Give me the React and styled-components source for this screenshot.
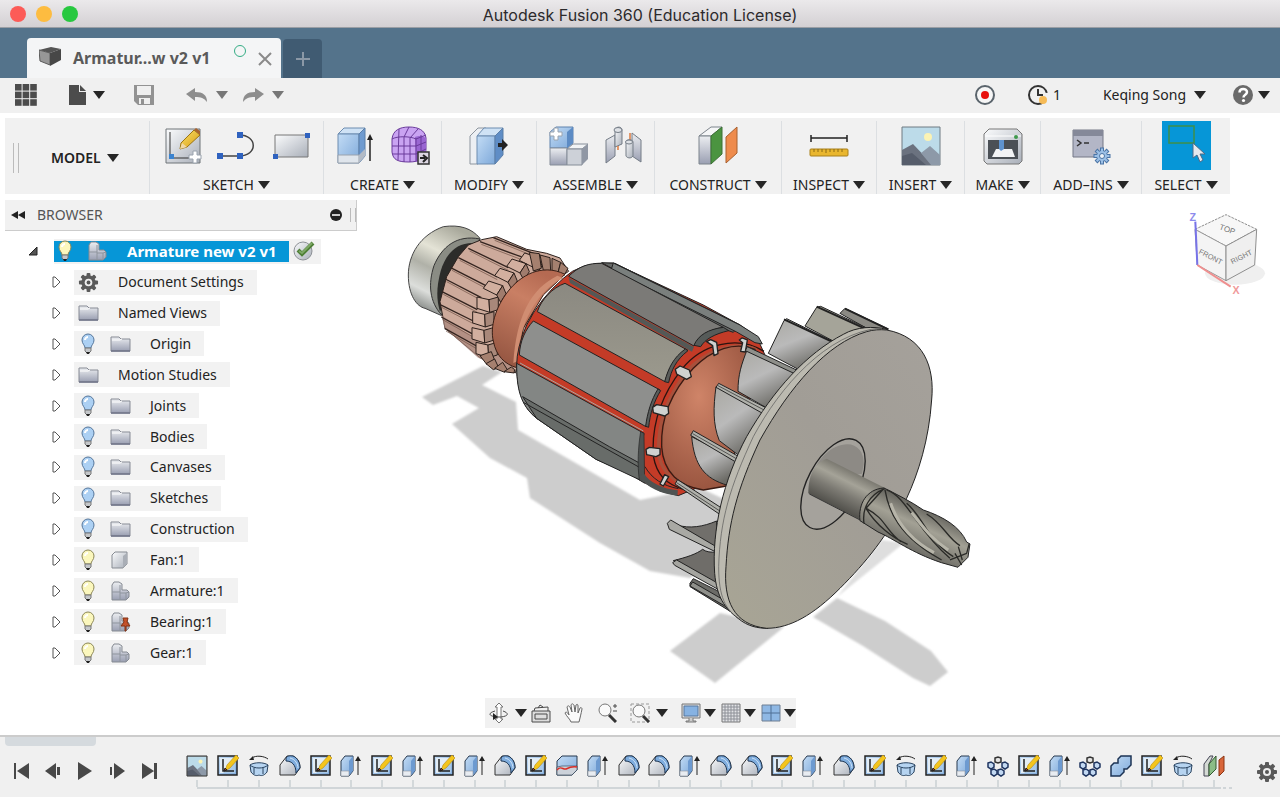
import { useState } from "react";
import styled, { createGlobalStyle } from "styled-components";

const GlobalStyle = createGlobalStyle`
  * {
    box-sizing: border-box;
  }
  body {
    margin: 0;
    background-color: #fff;
    color: #222;
    font-family: "Noto Sans", "Open Sans", sans-serif;
    font-size: 14px;
    line-height: 20px;
  }
  button {
    border: none;
    padding: 0;
    background: transparent;
    font: inherit;
    color: inherit;
    cursor: pointer;
  }
  svg {
    display: block;
    flex: none;
  }
`;

const Page = styled.div`
  min-height: 100vh;
  display: flex;
  flex-direction: column;
`;

const TitleBar = styled.header`
  height: 28px;
  flex: none;
  display: grid;
  grid-template-columns: 1fr auto 1fr;
  align-items: center;
  padding: 0 10px;
  background: linear-gradient(#ebe9eb, #d3d0d3);
  border-bottom: 1px solid #9a9ea4;
`;
const Lights = styled.div`
  display: flex;
  gap: 10px;
`;
const Light = styled.button`
  width: 16px;
  height: 16px;
  border-radius: 50%;
  background-color: ${(p) => p.$color};
`;
const WindowTitle = styled.h1`
  margin: 0;
  padding-top: 2px;
  font-family: Inter, sans-serif;
  font-size: 16px;
  font-weight: 400;
  color: #2c2a2c;
`;

const TabBar = styled.nav`
  height: 50px;
  flex: none;
  display: flex;
  align-items: flex-end;
  gap: 2px;
  padding-left: 27px;
  background-color: #54738b;
`;
const Tab = styled.div`
  width: 254px;
  height: 40px;
  display: flex;
  align-items: center;
  padding: 0 9px 0 12px;
  border-radius: 4px 4px 0 0;
  background-color: #f4f5f6;
`;
const TabName = styled.span`
  flex: 1;
  margin-left: 12px;
  font-size: 16px;
  font-weight: 700;
  color: #5a5a5a;
`;
const SyncDot = styled.span`
  width: 12px;
  height: 12px;
  margin: 0 12px 14px 0;
  border: 1px solid #35ad85;
  border-radius: 50%;
`;
const NewTab = styled.button`
  width: 39px;
  height: 39px;
  display: grid;
  place-items: center;
  border-radius: 4px 4px 0 0;
  background-color: #405b72;
`;

const QuickBar = styled.div`
  height: 35px;
  flex: none;
  display: flex;
  align-items: center;
  justify-content: space-between;
  padding: 0 10px 2px 15px;
  background-color: #f0f0f0;
`;
const QuickGroup = styled.div`
  display: flex;
  align-items: center;
  gap: ${(p) => p.$gap}px;
`;
const QuickButton = styled.button`
  display: flex;
  align-items: center;
  gap: ${(p) => p.$gap || 6}px;
`;

const Ribbon = styled.div`
  flex: none;
  height: 76px;
  width: fit-content;
  display: flex;
  margin: 5px 0 0 5px;
  padding-top: 3px;
  background-color: #f1f1f1;
`;
const RibbonGroup = styled.section`
  width: ${(p) => p.$width}px;
  display: flex;
  flex-direction: column;
  align-items: center;
  justify-content: space-between;
  border-left: 1px solid #dcdfe2;
`;
const RibbonIcons = styled.div`
  height: 49px;
  display: flex;
  align-items: center;
  gap: 14px;
`;
const RibbonLabel = styled.button`
  height: 18px;
  display: flex;
  align-items: center;
  gap: 4px;
  line-height: 18px;
`;
const Workspace = styled.div`
  width: 144px;
  display: flex;
  align-items: center;
  gap: 32px;
  padding-left: 8px;
`;
const Grip = styled.span`
  width: 6px;
  height: ${(p) => p.$height}px;
  border: solid #bbb;
  border-width: 0 1px;
`;
const WorkspaceButton = styled(QuickButton)`
  font-weight: 600;
`;
const SelectTile = styled.button`
  width: 49px;
  height: 49px;
  background-color: #0696d7;
`;

const Main = styled.main`
  flex: 1;
  display: grid;
  grid-template-columns: 400px 1fr 100px;
  grid-template-rows: 1fr auto;
`;
const BrowserPanel = styled.aside`
  grid-row: 1;
  padding: 6px 0 0 5px;
`;
const BrowserHeader = styled.div`
  width: 352px;
  height: 31px;
  display: flex;
  align-items: center;
  gap: 11px;
  padding: 0 0 0 6px;
  background-color: #f1f1f1;
  border-bottom: 1px solid #ccc;
  border-right: 1px solid #ccc;
  color: #555;
`;
const BrowserTitle = styled.h2`
  flex: 1;
  margin: 0;
  font-size: 14px;
  font-weight: 400;
`;
const BrowserControls = styled.div`
  display: flex;
  align-items: center;
  gap: 8px;
`;
const Tree = styled.ul`
  height: 432px;
  margin: 5px 0 0;
  padding: 0;
  display: grid;
  grid-auto-rows: 1fr;
  list-style: none;
`;
const TreeRow = styled.li`
  display: flex;
  align-items: center;
  gap: ${(p) => (p.$root ? 15 : 12)}px;
  padding-left: ${(p) => (p.$root ? 22 : 46)}px;
`;
const TreeItem = styled.div`
  height: 25px;
  display: flex;
  align-items: center;
  gap: 12px;
  padding: 0 13px 0 4px;
  background-color: #f2f2f2;
`;
const TreeName = styled.span`
  margin-left: 7px;
`;
const RootItem = styled.div`
  height: 25px;
  display: flex;
  align-items: center;
  gap: 4px;
  padding-right: 6px;
  background-color: #f2f2f2;
`;
const RootSelected = styled.div`
  height: 21px;
  display: flex;
  align-items: center;
  gap: 12px;
  padding: 0 12px 0 1px;
  background-color: #0696d7;
  color: #fff;
  font-size: 15px;
  font-weight: 700;
`;

const Model = styled.svg`
  width: 100%;
  height: 100%;
  min-height: 504px;
`;
const CubeSlot = styled.div`
  padding-top: 11px;
`;
const NavBar = styled.div`
  grid-column: 1 / -1;
  justify-self: center;
  height: 30px;
  display: flex;
  align-items: center;
  gap: 13px;
  margin-bottom: 7px;
  padding-left: 4px;
  background-color: #f1f1f1;
`;
const NavGroup = styled.div`
  display: flex;
  align-items: center;
  gap: ${(p) => p.$gap}px;
`;

const Timeline = styled.footer`
  flex: none;
  height: 62px;
  display: flex;
  background-color: #f0f0f0;
  border-top: 2px solid #ccc;
`;
const Playback = styled.div`
  width: 182px;
  padding-left: 5px;
`;
const ScrollThumb = styled.div`
  width: 91px;
  height: 9px;
  border-radius: 0 0 4px 4px;
  background-color: #d5dade;
`;
const PlaybackButtons = styled.div`
  display: flex;
  gap: 12px;
  padding: 15px 0 0 6px;
`;
const Track = styled.div`
  flex: 1;
  padding-top: 18px;
`;
const Features = styled.ol`
  display: grid;
  grid-auto-flow: column;
  grid-auto-columns: 1fr;
  justify-items: center;
  margin: 0;
  padding: 0;
  list-style: none;
`;
const Feature = styled.li`
  display: flex;
  flex-direction: column;
  align-items: center;
  gap: 3px;

  &::after {
    content: "";
    width: 2px;
    height: 7px;
    background-color: #d3d8da;
  }
`;
const Rail = styled.div`
  height: 2px;
  margin: 0 -6px 0 15px;
  background: linear-gradient(#d0d5d8, #d0d5d8) no-repeat 0 0 / calc(100% - 14px) 100%,
    repeating-linear-gradient(90deg, #d0d5d8 0 3px, transparent 3px 6px);
`;
const TimelineSettings = styled.button`
  width: 51px;
  padding: 9px 2px 0 0;
  display: grid;
  place-items: center end;
`;

/* small shared glyphs */

const Caret = ({ color = "#262626" }) => (
  <svg width="12" height="10" viewBox="0 0 12 10">
    <path d="M0 1h12L6 9z" fill={color} />
  </svg>
);

const Gear = ({ size = 22 }) => (
  <svg width={size} height={size} viewBox="0 0 22 22">
    <g fill="#5a5a5a">
      {[0, 45, 90, 135].map((a) => (
        <rect key={a} x="9" y="1" width="4" height="20" rx="1" transform={`rotate(${a} 11 11)`} />
      ))}
      <circle cx="11" cy="11" r="7.500" />
    </g>
    <circle cx="11" cy="11" r="4" fill="#eee" />
    <circle cx="11" cy="11" r="2" fill="#555" />
  </svg>
);

const Defs = () => (
  <svg width="0" height="0" style={{ position: "absolute" }} aria-hidden="true">
    <defs>
      <linearGradient id="steel" x1="0" y1="0" x2="1" y2="1">
        <stop offset="0" stopColor="#fbfcfd" />
        <stop offset="1" stopColor="#a9afb9" />
      </linearGradient>
      <linearGradient id="steelDown" x1="0" y1="0" x2="0" y2="1">
        <stop offset="0" stopColor="#eceef1" />
        <stop offset="1" stopColor="#9a9fb2" />
      </linearGradient>
      <linearGradient id="blue" x1="0" y1="0" x2="1" y2="1">
        <stop offset="0" stopColor="#c3dcf5" />
        <stop offset="1" stopColor="#7ea9da" />
      </linearGradient>
      <linearGradient id="pencil" x1="0" y1="0" x2="1" y2="1">
        <stop offset="0" stopColor="#fbe26a" />
        <stop offset="1" stopColor="#d79b12" />
      </linearGradient>
    </defs>
  </svg>
);

/* quick access bar */

const AppsIcon = () => (
  <svg width="22" height="22" viewBox="0 0 22 22" fill="#4c4c4c">
    {[0, 1, 2].map((r) =>
      [0, 1, 2].map((c) => <rect key={`${r}${c}`} x={c * 7.6} y={r * 7.6} width="6.600" height="6.600" />)
    )}
  </svg>
);
const FileIcon = () => (
  <svg width="19" height="22" viewBox="0 0 19 22">
    <path d="M1 1h10v7h7v13H1z" fill="#4c4c4c" />
    <path d="M12 1v6h6z" fill="#4c4c4c" />
  </svg>
);
const SaveIcon = () => (
  <svg width="22" height="22" viewBox="0 0 22 22">
    <path d="M1 1h20v20H5l-4-4z" fill="#929292" />
    <path d="M4 2h14v9H4z" fill="#efefef" />
    <path d="M6 14h11v6H6z" fill="#efefef" />
    <path d="M8 15h3v5H8z" fill="#929292" />
  </svg>
);
const UndoIcon = ({ flip }) => (
  <svg width="22" height="16" viewBox="0 0 22 16">
    <path
      d="M0 7l9-6v4c8 0 12 3 12 10-3-4-6-5-12-5v4z"
      fill="#8d8d8d"
      transform={flip ? "matrix(-1 0 0 1 22 0)" : undefined}
    />
  </svg>
);
const RecordIcon = () => (
  <svg width="20" height="20" viewBox="0 0 20 20">
    <circle cx="10" cy="10" r="9" fill="#f6f6f6" stroke="#5a646c" strokeWidth="2" />
    <circle cx="10" cy="10" r="4" fill="#e8100c" />
  </svg>
);
const ClockIcon = () => (
  <svg width="22" height="22" viewBox="0 0 22 22">
    <circle cx="11" cy="11" r="9" fill="none" stroke="#333" strokeWidth="2" strokeDasharray="46 8" strokeDashoffset="-8" />
    <path d="M11 5v6h5" fill="none" stroke="#333" strokeWidth="2" />
    <circle cx="16" cy="16" r="4" fill="#f6bb57" />
  </svg>
);
const HelpIcon = () => (
  <svg width="20" height="20" viewBox="0 0 20 20">
    <circle cx="10" cy="10" r="10" fill="#6a6a6a" />
    <path d="M6.500 7.500c0-5 7.500-4.500 7.500-.5 0 3-3.500 2.500-3.500 5.500" fill="none" stroke="#fff" strokeWidth="2.500" />
    <circle cx="10.500" cy="15.500" r="1.600" fill="#fff" />
  </svg>
);
const TabCube = () => (
  <svg width="22" height="24" viewBox="0 0 22 24">
    <path d="M0 4L12 1l10 2-11 4z" fill="#555" />
    <path d="M0 4l11 3v12L1 15z" fill="#979797" stroke="#5b5b5b" />
    <path d="M11 7l11-4v11l-11 6z" fill="#474747" />
  </svg>
);

/* ribbon icons, all on a 40px square */

const Big = ({ children }) => (
  <svg width="40" height="40" viewBox="0 0 40 40">
    {children}
  </svg>
);
const BigPlus = ({ x, y }) => (
  <path
    d="M-6-2h4v-4h4v4h4v4h-4v4h-4v-4h-4z"
    transform={`translate(${x} ${y})`}
    fill="#fff"
    stroke="#9aa3ae"
  />
);
const CreateSketch = () => (
  <Big>
    <path d="M3 3h34v34H3z" fill="url(#steel)" stroke="#6f7479" />
    <path d="M7 6v26h20" fill="none" stroke="#333" />
    <rect x="6" y="28" width="5" height="5" fill="#3b83cf" />
    <path d="M18 17L31 4l6 5-13 12-7 2z" fill="url(#pencil)" stroke="#9b7415" />
    <path d="M31 4l2-2 4 3v4z" fill="#a8642f" />
    <path d="M17 23l2-6 5 4z" fill="#f0d8a8" />
    <BigPlus x="32" y="31" />
  </Big>
);
const LineIcon = () => (
  <Big>
    <path d="M3 30h19c19 0 19-21 0-21" fill="none" stroke="#444" strokeWidth="1.500" />
    <g fill="#2f62bf">
      <rect x="0" y="27" width="6" height="6" />
      <rect x="20" y="27" width="6" height="6" />
      <rect x="20" y="6" width="6" height="6" />
    </g>
  </Big>
);
const RectIcon = () => (
  <Big>
    <path d="M4 9h33v22H4z" fill="url(#steel)" stroke="#777" />
    <g fill="#2f62bf">
      <rect x="2" y="28" width="5" height="5" />
      <rect x="34" y="7" width="5" height="5" />
    </g>
  </Big>
);
const ExtrudeBig = () => (
  <Big>
    <path d="M2 8l6-6h21l-6 6z" fill="#cfe2f5" stroke="#6c8cb0" />
    <path d="M2 8h21v29H2z" fill="url(#blue)" stroke="#6c8cb0" />
    <path d="M23 8l6-6v28l-6 7z" fill="#6f9bd0" stroke="#5b7ea8" />
    <path d="M2 29h21v8H2z" fill="#dfe5ec" stroke="#9ba3ad" />
    <path d="M23 29l6-6v7l-6 7z" fill="#b3bbc6" />
    <path d="M34 35V10" stroke="#222" strokeWidth="1.500" />
    <path d="M31 14l3-6 3 6z" fill="#222" />
  </Big>
);
const FormIcon = () => (
  <Big>
    <path d="M2 13C3 4 10 1 19 1s16 3 17 11v11c0 9-6 13-17 13S3 34 2 26z" fill="#c9a3f2" stroke="#6a3b9b" />
    <path d="M25 11C32 8 36 12 36 13v11c0 8-5 10-10 12z" fill="#9a66d2" />
    <path d="M2 13c5-3 18-3 24 0l10-4M2 20h24l10-4M2 28h24l10-5M9 3l-1 31M19 1l-5 10v25M28 3l-8 9v24M26 12v23M31 9v23" fill="none" stroke="#6a3b9b" />
    <rect x="28" y="26" width="11" height="12" fill="#dcd6e2" stroke="#333" strokeWidth="1.500" />
    <path d="M30 32h5M33 29l4 3-4 4" fill="none" stroke="#222" strokeWidth="2" />
  </Big>
);
const PressPull = () => (
  <Big>
    <path d="M1 10l8-8h8l-8 8v28H1z" fill="#eceff3" stroke="#8d959e" />
    <path d="M8 10l7-8h19l-8 8z" fill="#cfe2f5" stroke="#6c8cb0" />
    <path d="M8 10h18v28H8z" fill="url(#blue)" stroke="#6c8cb0" />
    <path d="M26 10l8-8v27l-8 9z" fill="#5f8dc6" stroke="#5b7ea8" />
    <path d="M29 17h4v-4l6 6-6 6v-4h-4z" fill="#222" />
  </Big>
);
const NewComponent = () => (
  <Big>
    <path d="M1 22V6l6-5h17v16l-6 5z" fill="url(#blue)" stroke="#5e82ad" />
    <path d="M18 22V6l6-5v16z" fill="#5c8bc4" />
    <path d="M1 22h17v17H1z" fill="url(#steelDown)" stroke="#858d98" />
    <path d="M18 23l6-5h15l-6 5z" fill="#f1f3f5" stroke="#858d98" />
    <path d="M18 23h15v16H18z" fill="#cdd1d8" stroke="#858d98" />
    <path d="M33 23l6-5v15l-6 6z" fill="#9097a4" />
    <BigPlus x="7" y="8" />
  </Big>
);
const JointIcon = () => (
  <Big>
    <path d="M3 14l9-5v21l-9 7z" fill="url(#steelDown)" stroke="#747c86" />
    <path d="M12 5c0-5 7-5 7-1v14l-7 3z" fill="url(#steel)" stroke="#747c86" />
    <ellipse cx="15" cy="4" rx="4" ry="2.500" fill="#dfe2e6" stroke="#747c86" />
    <path d="M15 20v4M27 7v7" stroke="#dd7b40" strokeWidth="1.500" />
    <path d="M29 7l9 7v22l-9-6z" fill="url(#steelDown)" stroke="#747c86" />
    <path d="M23 16c0-3 7-3 7 0v14c-2 3-6 2-7 0z" fill="url(#steel)" stroke="#747c86" />
    <ellipse cx="26" cy="16" rx="3.500" ry="2" fill="#dfe2e6" stroke="#747c86" />
  </Big>
);
const PlaneIcon = () => (
  <Big>
    <path d="M1 10l12-9h11l-11 9z" fill="#f5f6f7" stroke="#7d848c" />
    <path d="M1 10h12v28H1z" fill="url(#steelDown)" stroke="#7d848c" />
    <path d="M13 10l11-9v27l-11 10z" fill="#4b9440" stroke="#3c7034" />
    <path d="M28 11l11-10v26L28 37z" fill="#ee8b4c" stroke="#a8602f" />
  </Big>
);
const MeasureIcon = () => (
  <Big>
    <path d="M2 9v7M38 9v7M2 12h36" stroke="#222" strokeWidth="1.500" />
    <rect x="1" y="23" width="38" height="7" rx="1" fill="#e9b62e" stroke="#a9801a" />
    <path d="M5 23v3M9 23v3M13 23v3M17 23v4M21 23v3M25 23v3M29 23v3M33 23v3" stroke="#8c6a12" />
  </Big>
);
const PictureArt = () => (
  <>
    <path d="M1 1h38v38H1z" fill="#bcdbe9" stroke="#6f7b82" />
    <circle cx="27" cy="11" r="4" fill="#fbf3b4" />
    <path d="M1 24l11-6 20 21H1z" fill="#6b727f" />
    <path d="M20 27l9-7 10 9v10H30z" fill="#8d99a8" />
    <path d="M1 30l10-3 14 12H1z" fill="#565d6b" />
  </>
);
const InsertIcon = () => (
  <Big>
    <PictureArt />
  </Big>
);
const MakeIcon = () => (
  <Big>
    <path d="M6 3h28l5 5v27l-3 3H4l-3-3V8z" fill="url(#steel)" stroke="#777" />
    <path d="M2 10h36" stroke="#fff" />
    <circle cx="33" cy="11" r="2" fill="#3f9a4d" />
    <rect x="5" y="14" width="30" height="19" fill="#4b5056" />
    <path d="M13 23h16l3 8H9z" fill="#f2f3f5" />
    <path d="M16 14h5v9l-3 2-2-2z" fill="#5f93cf" />
  </Big>
);
const AddinsIcon = () => (
  <Big>
    <path d="M2 4h30v27H2z" fill="#b3b6c6" stroke="#757987" />
    <path d="M2 4h30v6H2z" fill="#858999" />
    <path d="M6 14l4 3-4 3M13 17h5" fill="none" stroke="#333" strokeWidth="1.500" />
    <g transform="translate(31 30)" fill="#9cc0e6" stroke="#4b74a5">
      {[0, 45, 90, 135].map((a) => (
        <rect key={a} x="-1.500" y="-8" width="3" height="16" transform={`rotate(${a})`} />
      ))}
      <circle r="5" stroke="none" />
      <circle r="2.500" fill="#eef3f8" />
    </g>
  </Big>
);
const SelectIcon = () => (
  <svg width="49" height="49" viewBox="0 0 49 49">
    <rect x="7" y="5" width="25" height="17" fill="none" stroke="#3f8f4a" strokeWidth="1.500" />
    <path d="M31 22v15l4-3 3 7 3-2-3-6h5z" fill="#e6e9ee" stroke="#4c6a88" />
  </svg>
);

/* browser tree icons */

const Bulb = ({ on }) => (
  <svg width="20" height="22" viewBox="0 0 20 22">
    <path d="M7 15c0-3-3-4-3-8a6 6 0 0 1 12 0c0 4-3 5-3 8z" fill={on ? "#fbf7bd" : "#acd0f3"} stroke={on ? "#8c8756" : "#55769b"} />
    <path d="M7 7c0-2 2-3 3-3" fill="none" stroke="#fff" strokeWidth="2" />
    <path d="M7 15h6v3l-2 2H9l-2-2z" fill="#c4c7ca" stroke="#777" />
    <path d="M8 19h4l-1 2H9z" fill="#222" />
  </svg>
);
const Folder = () => (
  <svg width="21" height="20" viewBox="0 0 21 20">
    <path d="M1 3h8l2 2h9v12H1z" fill="url(#steelDown)" stroke="#878b95" />
    <path d="M2 6h8l2-1" fill="none" stroke="#fff" />
    <path d="M1 17h19" stroke="#70748a" strokeWidth="1.500" />
  </svg>
);
const Part = () => (
  <svg width="21" height="20" viewBox="0 0 21 20">
    <path d="M2 5l3-3h12v12l-4 4H2z" fill="url(#steel)" stroke="#878c93" />
    <path d="M13 6v12l4-4V3z" fill="#a9aeb6" />
  </svg>
);
const Assembly = ({ pinned }) => (
  <svg width="21" height="20" viewBox="0 0 21 20">
    <path d="M2 4l2-3h5l3 2v6h5l2 2v5l-3 3H2z" fill="url(#steelDown)" stroke="#858a92" />
    <path d="M2 11h8M10 19V4M10 12h6l3-1M16 12v7" fill="none" stroke="#8e949d" />
    {pinned && (
      <path d="M13 6h5l-1 4 3 4h-4v5h-1v-5h-4l3-4z" fill="#c4512a" stroke="#833112" />
    )}
  </svg>
);
const CheckBadge = () => (
  <svg width="22" height="22" viewBox="0 0 22 22">
    <circle cx="10" cy="11" r="9" fill="url(#steel)" stroke="#8d9196" />
    <path d="M5 10l4 4L20 3" fill="none" stroke="#4d7f35" strokeWidth="4" />
    <path d="M6 11l3 2L19 3" fill="none" stroke="#7ea866" strokeWidth="2" />
  </svg>
);

/* navigation bar icons */

const Small = ({ children }) => (
  <svg width="20" height="20" viewBox="0 0 20 20" fill="none" stroke="#4a4a4a">
    {children}
  </svg>
);
const navIcons = {
  orbit: (
    <Small>
      <path d="M8 4v12H6l4 4 4-4h-2V4h2l-4-4-4 4z" fill="#fff" stroke="#777" />
      <path d="M6 8c-7 2-7 5 2 6h4c8-1 8-4 2-6" />
      <path d="M4 10l5 4-5 3z" fill="#222" stroke="none" />
    </Small>
  ),
  lookAt: (
    <Small>
      <path d="M1 8h18v11H1z" fill="#ddd" />
      <path d="M4 11h12v5H4zM3 8l1-3 13-1v4M7 5l2-3 3 2" />
    </Small>
  ),
  hand: (
    <Small>
      <path d="M7 19c-1-3-4-5-6-9 1-2 3 0 4 2L3 4c1-2 2-1 3 0l2 5-1-7c1-2 2-1 3 0l1 7 1-7c1-1 2-1 2 1v7l2-5c1-1 2 0 2 1-1 5-2 9-3 13z" fill="#fafafa" stroke="#666" />
    </Small>
  ),
  zoom: (
    <Small>
      <circle cx="8" cy="7" r="6" fill="#fafafa" stroke="#777" />
      <path d="M12 12l7 7" stroke="#333" strokeWidth="3" />
      <path d="M16 3h4M18 1v4M16 8h4" />
    </Small>
  ),
  zoomWindow: (
    <Small>
      <path d="M1 1h18v18H1z" strokeDasharray="3 2" stroke="#999" />
      <circle cx="9" cy="8" r="6" fill="#fafafa" stroke="#777" />
      <path d="M13 13l6 6" stroke="#333" strokeWidth="3" />
    </Small>
  ),
  display: (
    <Small>
      <path d="M1 1h18v14H1z" fill="#ddd" stroke="#777" />
      <path d="M3 3h14v10H3z" fill="#86b2e2" stroke="#56779d" />
      <path d="M8 15v3H5v1h10v-1h-3v-3" fill="#ccc" stroke="#777" />
    </Small>
  ),
  grid: (
    <Small>
      <path d="M1 1h18v18H1z" fill="#e2e3e6" stroke="#777" />
      <path d="M4 1v18M7 1v18M10 1v18M13 1v18M16 1v18M1 4h18M1 7h18M1 10h18M1 13h18M1 16h18" stroke="#8d9097" />
    </Small>
  ),
  views: (
    <Small>
      <path d="M1 2h18v16H1z" fill="#8fb8e4" stroke="#6f7f92" />
      <path d="M10 2v16M1 10h18" stroke="#4f6f94" />
    </Small>
  ),
};

const NavButton = ({ icon, label, menu, gap = 3 }) => (
  <QuickButton $gap={gap} aria-label={label}>
    {navIcons[icon]}
    {menu && <Caret />}
  </QuickButton>
);

/* timeline feature icons, on a 22px square */

const featureArt = {
  canvas: (
    <>
      <g transform="translate(1 1) scale(.5)">
        <PictureArt />
      </g>
      <path d="M1 1h20v20H1z" fill="none" stroke="#2c2c2c" />
    </>
  ),
  sketch: (
    <>
      <path d="M1 1h19v19H1z" fill="url(#blue)" stroke="#222" strokeWidth="1.500" />
      <path d="M3 3h15v15H3z" fill="#e3edf5" />
      <path d="M18 6v12H6z" fill="#a9c9e8" />
      <path d="M6 4v12h11" fill="none" stroke="#222" strokeWidth="1.500" />
      <path d="M10 10l9-10 3 3-9 10-5 3z" fill="#f4c51c" stroke="#b58a10" strokeWidth=".6" />
      <path d="M7 16l1-3 2 2z" fill="#b3401d" stroke="#222" />
    </>
  ),
  revolve: (
    <>
      <path d="M4 3c4-3 12-2 16 1" fill="none" stroke="#222" />
      <path d="M1 5l4-4 1 4z" fill="#222" />
      <path d="M2 10c4-3 14-3 18 0l-1 7c-3 4-6 4-8 3-2 1-5 1-8-3z" fill="#b6d4f1" stroke="#28425f" />
      <path d="M2 10c4 4 14 4 18 0M6 13v6M15 13v6" fill="none" stroke="#28425f" />
    </>
  ),
  fillet: (
    <>
      <path d="M1 20V10l7-9h6c5 2 7 7 7 12l-5 7z" fill="url(#steel)" stroke="#333" />
      <path d="M7 3c2-3 5-2 7-2 5 2 7 7 7 12l-4 5c0-8-4-12-10-12z" fill="#7fadde" stroke="#1d3552" />
      <path d="M11 3c5 1 8 6 8 10" fill="none" stroke="#cfe3f7" />
    </>
  ),
  extrude: (
    <>
      <path d="M1 6l4-5h8v15l-4 5H1z" fill="url(#blue)" stroke="#27394f" />
      <path d="M9 6v14l4-4V1z" fill="#6d9ad0" />
      <path d="M1 16h8v5H1z" fill="#e8ecf1" stroke="#8b929b" strokeWidth=".6" />
      <path d="M18 20V4" stroke="#222" />
      <path d="M15 6l3-5 3 5z" fill="#222" />
    </>
  ),
  split: (
    <>
      <path d="M1 6l5-5h15v14l-5 5H1z" fill="url(#blue)" stroke="#27394f" />
      <path d="M1 12l5-1h15v4l-5 5H1z" fill="#ccd2da" stroke="#27394f" strokeWidth=".6" />
      <path d="M1 15c4-5 6 0 9-1 4-2 7-3 11-2" fill="none" stroke="#d92d27" strokeWidth="1.500" />
    </>
  ),
  pattern: (
    <>
      {[[4, 10], [7, 17], [14, 17], [18, 10]].map(([x, y]) => (
        <path key={`${x}${y}`} d="M-3-2l3-1 3 2v3l-3 2-3-2z" transform={`translate(${x} ${y})`} fill="#c3d9f2" stroke="#1f3560" strokeWidth="1.500" />
      ))}
      <path d="M8 3l3-1 3 1v4l-3 1-3-1z" fill="#e4e4e4" stroke="#333" strokeWidth="1.500" />
    </>
  ),
  combine: (
    <path d="M1 11l3-3h4V4l3-3h10v9l-4 4h-3v3l-4 4H1z" fill="url(#blue)" stroke="#1d3354" strokeWidth="1.500" />
  ),
  plane: (
    <>
      <path d="M1 9l6-8h3L6 9v12H1z" fill="#d5dad5" stroke="#445" />
      <path d="M6 9l7-8v13l-7 7z" fill="#8bbd87" stroke="#33592f" />
      <path d="M16 5l5-4v15l-5 5z" fill="#d9663a" stroke="#8a3413" />
    </>
  ),
};

const features = [
  "canvas", "sketch", "revolve", "fillet", "sketch", "extrude", "sketch",
  "extrude", "sketch", "extrude", "fillet", "sketch", "split", "extrude",
  "fillet", "fillet", "extrude", "fillet", "fillet", "sketch", "extrude",
  "fillet", "sketch", "revolve", "sketch", "extrude", "pattern", "sketch",
  "extrude", "pattern", "combine", "sketch", "revolve", "plane",
];

const playback = [
  { label: "Go to start", d: "M1 1h2v16H1zM16 1v16L4 9z" },
  { label: "Step back", d: "M11 1v16L0 9zM12 5h3v8h-3z" },
  { label: "Play", d: "M1 0v18l14-9z" },
  { label: "Step forward", d: "M5 1v16l11-8zM1 5h2v8H1z" },
  { label: "Go to end", d: "M1 1v16l12-8zM13 1h3v16h-3z" },
];

const tools = [
  { label: "SKETCH", width: 174, icons: [CreateSketch, LineIcon, RectIcon] },
  { label: "CREATE", width: 118, icons: [ExtrudeBig, FormIcon] },
  { label: "MODIFY", width: 95, icons: [PressPull] },
  { label: "ASSEMBLE", width: 118, icons: [NewComponent, JointIcon] },
  { label: "CONSTRUCT", width: 127, icons: [PlaneIcon] },
  { label: "INSPECT", width: 95, icons: [MeasureIcon] },
  { label: "INSERT", width: 88, icons: [InsertIcon] },
  { label: "MAKE", width: 76, icons: [MakeIcon] },
  { label: "ADD–INS", width: 101, icons: [AddinsIcon] },
];

const nodes = [
  { name: "Document Settings", icon: <Gear size={21} /> },
  { name: "Named Views", icon: <Folder /> },
  { name: "Origin", icon: <Folder />, bulb: "off" },
  { name: "Motion Studies", icon: <Folder /> },
  { name: "Joints", icon: <Folder />, bulb: "off" },
  { name: "Bodies", icon: <Folder />, bulb: "off" },
  { name: "Canvases", icon: <Folder />, bulb: "off" },
  { name: "Sketches", icon: <Folder />, bulb: "off" },
  { name: "Construction", icon: <Folder />, bulb: "off" },
  { name: "Fan:1", icon: <Part />, bulb: "on" },
  { name: "Armature:1", icon: <Assembly />, bulb: "on" },
  { name: "Bearing:1", icon: <Assembly pinned />, bulb: "on" },
  { name: "Gear:1", icon: <Assembly />, bulb: "on" },
];

/* commutator bars: start and end of each groove */
const grooves = [
  [280, 68, 400, 115], [240, 80, 365, 126], [205, 100, 325, 158], [175, 128, 292, 186],
  [152, 158, 262, 214], [136, 192, 244, 248], [126, 230, 232, 284], [119, 268, 220, 318],
  [124, 306, 216, 356], [134, 340, 235, 396],
];
/* risers tilt over the top of the ring, then stand square at its side */
const tiltedRisers = [[358, 116], [320, 134], [284, 162], [250, 200]];
const squareRisers = [[231, 246], [218, 290], [216, 338], [228, 382]];

const clamps = [
  "M200 155l12-6 18 8 4 34-12 6-4-30z",
  "M298 150l8-6 16 6-6 36-14-2 6-26z",
  "M106 238l14-10 28 12 6 20-14 8-30-16z",
  "M38 352l12-8 34 6 2 20-12 8-34-10z",
  "M18 478l10-6 32 4v18l-12 6-28-6z",
  "M60 582l14-28 12 6-16 28z",
];

const Armature = () => (
  <Model viewBox="400 194 780 504" role="img" aria-label="Armature model">
    <defs>
      <linearGradient id="copper" x1=".6" y1="0" x2=".2" y2="1">
        <stop offset="0" stopColor="#b56a52" />
        <stop offset=".3" stopColor="#c97f64" />
        <stop offset="1" stopColor="#935440" />
      </linearGradient>
      <radialGradient id="dome" cx=".4" cy=".35" r=".7">
        <stop offset="0" stopColor="#cf8468" />
        <stop offset="1" stopColor="#96523d" />
      </radialGradient>
      <linearGradient id="ring" x1=".6" y1="0" x2=".2" y2="1">
        <stop offset="0" stopColor="#a9a99c" />
        <stop offset=".3" stopColor="#e4e3d6" />
        <stop offset=".5" stopColor="#b0b1a8" />
        <stop offset=".75" stopColor="#dcdedb" />
        <stop offset="1" stopColor="#6f7370" />
      </linearGradient>
      <linearGradient id="blade" x1="0" y1="0" x2=".5" y2="1">
        <stop offset="0" stopColor="#a9a8a2" />
        <stop offset=".5" stopColor="#bababa" />
        <stop offset="1" stopColor="#6c6b66" />
      </linearGradient>
      <linearGradient id="disk" x1="1" y1="0" x2="0" y2="1">
        <stop offset="0" stopColor="#a5a19b" />
        <stop offset=".45" stopColor="#a19d96" />
        <stop offset="1" stopColor="#a8a595" />
      </linearGradient>
      <linearGradient id="sheen" x1="0" y1="0" x2="0" y2="1">
        <stop offset="0" stopColor="#8b8981" />
        <stop offset="1" stopColor="#9b998d" />
      </linearGradient>
      <linearGradient id="shaft" gradientUnits="userSpaceOnUse" x1="645" y1="545" x2="590" y2="655">
        <stop offset="0" stopColor="#77756d" />
        <stop offset=".3" stopColor="#a5a398" />
        <stop offset=".6" stopColor="#7c7a73" />
        <stop offset="1" stopColor="#504f4a" />
      </linearGradient>
      <linearGradient id="drill" gradientUnits="userSpaceOnUse" x1="850" y1="650" x2="790" y2="780">
        <stop offset="0" stopColor="#63625c" />
        <stop offset=".4" stopColor="#a3a195" />
        <stop offset="1" stopColor="#686761" />
      </linearGradient>
      <filter id="soft">
        <feGaussianBlur stdDeviation="1" />
      </filter>
    </defs>

    <g fill="#cdcdcd" filter="url(#soft)">
      <path d="M422 397L483 366L502 372L482 385L516 402L518 430L640 500L700 488L726 500L716 560L690 578L650 571L600 543L530 498L527 478L490 458L452 424L479 408L457 396L433 405z" />
      <path d="M670 651l50-38 64 14-69 56-45-32z" />
      <path d="M813 617l24-19 48 23 46 30 17 21-18 14-17-8-50-32z" />
      <path d="M837 597l45-57 22 3-56 45z" fill="#dedede" />
    </g>

    <g transform="translate(400 215) scale(.3333)" strokeLinejoin="round">
      <path d="M240 70C215 40 180 28 130 35 60 60 25 120 25 180c0 60 25 95 50 100l50 22 60-140z" fill="url(#ring)" stroke="#444" strokeWidth="3" />
      <path d="M240 72c-70-14-115 24-138 80-18 55-14 108 23 148l40-100z" fill="#8a8c84" stroke="#333" strokeWidth="3" />
      <path d="M218 84c-54 0-82 38-96 84-12 44-14 84-2 122l40-80z" fill="#2c2c2a" />

      <path d="M205 90l40-16 45-9 90 38 60 12 40 14 26 40-90 60-70 245-106-46-105-88-15-80 20-75 35-60z" fill="#cdaa9b" stroke="#2c211d" strokeWidth="3" />
      <path d="M124 300l10 40 100 88 106 46 4-20-90-60z" fill="#a8857a" opacity=".7" />
      {grooves.map(([x1, y1, x2, y2]) => (
        <g key={x1}>
          <path d={`M${x1} ${y1}L${x2} ${y2}`} stroke="#33241f" strokeWidth="4" />
          <path d={`M${x1 + 4} ${y1 + 8}L${x2} ${y2 + 8}`} stroke="#6b4e43" strokeWidth="2" />
        </g>
      ))}
      {squareRisers.map(([x, y]) => (
        <g key={y} stroke="#2a1e1a" strokeWidth="3">
          <path d={`M${x} ${y}l36 8 2 38-38-12z`} fill="#d2af9f" />
          <path d={`M${x + 36} ${y + 8}l28-8v38l-26 8z`} fill="#a9887a" />
        </g>
      ))}
      {tiltedRisers.map(([x, y]) => (
        <g key={x} stroke="#2a1e1a" strokeWidth="3">
          <path d={`M${x} ${y + 20}l16-22 42 14-18 28z`} fill="#d2af9f" />
          <path d={`M${x + 40} ${y + 40}l18-28 10 24-16 26z`} fill="#a07c6d" />
        </g>
      ))}
      <g fill="#a5806f" stroke="#2a1e1a" strokeWidth="3">
        <path d="M388 112l30 4 6 44-24 8-6-30z" />
        <path d="M420 120l30 8 2 40-22-2z" />
        <path d="M456 130l26 12-8 32-18-8z" />
        <path d="M482 142l22 18-12 22-18-8z" />
        <path d="M240 422l34-12 10 26-24 12z" />
        <path d="M258 446l26-14 12 26-16 6z" />
        <path d="M284 460l24-18 14 22-8 8z" />
        <path d="M312 470l22-14 10 8-2 10z" />
      </g>

      <path d="M495 178c-70-35-135 5-170 50-40 50-55 110-45 150 8 45 35 70 70 80l20-118 60-100z" fill="url(#copper)" stroke="#3a1f16" strokeWidth="3" />
      <path d="M472 182c-80 40-122 120-132 262l12-5c5-110 56-210 138-250z" fill="#d08d72" />

      <path d="M490 190Q540 140 640 144L910 270L1020 330L1070 365L1095 420L1000 700L900 815L835 842L780 828L722 797L410 610Q350 565 350 450Q350 400 380 330Q420 250 490 190z" fill="#c43b27" stroke="#222" strokeWidth="3" />
      <path d="M605 143l40 2 375 185-20 22-35-12z" fill="#666967" stroke="#222" strokeWidth="3" />
      <path d="M640 144l380 186 55 35 12 22-22-4-55-32-376-188z" fill="#7a7f7d" stroke="#222" strokeWidth="3" />
      <path d="M506 184c30-30 60-40 99-39l365 192c-45 8-75 25-88 56z" fill="#7b7a77" stroke="#222" strokeWidth="3" />
      <path d="M970 337l16 10c-42 10-70 25-84 48l-20-4c13-31 43-48 88-54z" fill="#565b59" stroke="#222" strokeWidth="3" />
      <path d="M506 188l376 208-6 14-366-206z" fill="#545856" />
      <path d="M412 290c12-36 45-72 83-85l367 200c-36 22-57 55-67 95z" fill="url(#sheen)" stroke="#222" strokeWidth="3" />
      <path d="M856 402l8 5c-36 28-50 58-58 96l-12-3c12-42 26-72 62-98z" fill="#5a5d5a" stroke="#222" strokeWidth="3" />
      <path d="M358 420c2-42 18-76 42-102l380 207c-20 32-36 70-42 110z" fill="#8e8f8d" stroke="#222" strokeWidth="3" />
      <path d="M774 522l8 5c-20 32-32 70-36 110l-9-3c5-40 17-80 37-112z" fill="#585c5b" stroke="#222" strokeWidth="3" />
      <path d="M350 445l382 210c-10 50-10 90-4 138l-140-60-178-123c-50-40-60-90-60-165z" fill="#838684" stroke="#222" strokeWidth="3" />
      <path d="M368 545l260 150 92 50v50l-132-62-178-123z" fill="#686c69" stroke="#222" strokeWidth="3" />
      <path d="M370 562l350 196" stroke="#222" strokeWidth="3" />
      <path d="M732 655l-10-5c-8 50-10 100-4 145l16 10z" fill="#4e5251" stroke="#222" strokeWidth="2" />
      <path d="M360 444l370 204" stroke="#a6a9a5" strokeWidth="3" />
    </g>

    <g transform="translate(640 290) scale(.3333)" strokeLinejoin="round">
      <path d="M5 555c20 30 60 50 108 54" fill="none" stroke="#4f5352" strokeWidth="16" />
      <path d="M15 530c20 36 55 58 100 66" fill="none" stroke="#222" strokeWidth="3" />
      <path d="M372 184c-80-50-187-22-247 54-70 90-90 180-85 260 10 60 40 84 90 100" fill="none" stroke="#2a1410" strokeWidth="4" />
      <path d="M350 180c-60-30-150 0-210 65-60 80-85 150-85 240 5 50 35 85 90 105" fill="none" stroke="#a8503b" strokeWidth="10" />
      <path d="M345 178c-60-25-130 0-185 57C90 310 62 390 65 470c5 80 55 120 125 130l70-12 80-330z" fill="url(#dome)" stroke="#3a1a12" strokeWidth="4" />
      {clamps.map((d) => (
        <path key={d} d={d} fill="#cfd2d0" stroke="#222" strokeWidth="4" />
      ))}

      <g stroke="#222" strokeWidth="3">
        <path d="M110 705c40 12 80 5 120-12v90z" fill="#716f6b" />
        <path d="M82 700l10-10 140 82v16L88 718z" fill="#a9a9a4" />
        <path d="M100 812c40-10 70-20 88-34 10 8 25 10 44 8v96z" fill="#6f6d69" />
        <path d="M98 818l12-8 124 70v18L104 826z" fill="#a5a5a0" />
        <path d="M150 880l10-14 80 40 50 70-140-86z" fill="#6b6b67" />
        <path d="M150 888l8-12 100 58 14 24z" fill="#8f908b" />

        <path d="M600 70l15-15 130 62-50 6z" fill="#8b8a84" />
        <path d="M495 108l35-56 12-3 140 66-95 42z" fill="#a5a499" />
        <path d="M385 190L432 92l8-6 142 70-100 86z" fill="url(#blade)" />
        <path d="M432 88l150 70M530 50l150 68M615 56l130 62" strokeWidth="6" />
        <path d="M322 178l152 68-90 110-90-52c0-50 10-80 28-126z" fill="url(#blade)" />
        <path d="M322 170l152 72-8 10-150-70z" fill="#8e8f8a" />
        <path d="M228 290l146 72-70 140-66-50c-20-50-18-100-10-162z" fill="url(#blade)" />
        <path d="M228 292l8-12 145 75-8 18z" fill="#b0b1ab" />
        <path d="M155 440l140 72-32 74c-70-20-100-60-108-146z" fill="url(#blade)" />
        <path d="M152 436l8-14 140 80-6 18z" fill="#b0b1ab" />
        <path d="M105 582l8-13 130 84-4 20z" fill="#b0b1ab" />
        <path d="M234 287l140 74M158 431l136 78M110 578l128 84" strokeWidth="2" />
      </g>

      <path d="M740 118c-40-10-90-8-130 15C500 190 400 300 320 440 250 570 215 720 224 850c6 70 30 105 70 135 30 25 60 30 90 30l200-420z" fill="#bcbab0" stroke="#222" strokeWidth="3" />
      <path d="M740 120c110 20 145 110 135 210-8 120-40 220-75 295-60 115-120 190-200 270-80 80-150 120-220 120-100-10-130-85-122-185 7-130 32-230 102-380 90-160 200-290 320-325 20-6 40-7 60-5z" fill="url(#disk)" stroke="#222" strokeWidth="3" />
      <path d="M720 114C560 130 420 290 340 440c-70 150-100 250-104 390 0 90 20 130 64 158" fill="none" stroke="#555" strokeWidth="2" />

      <ellipse cx="579" cy="582" rx="148" ry="76" transform="rotate(-62 579 582)" fill="#a5a29c" stroke="#222" strokeWidth="4" />
      <path d="M512 580c5-50 45-105 93-115 40-10 68 15 66 58l-5 28-60 10z" fill="#8d8a85" />
      <path d="M505 610c0-50 15-90 55-104l175 88-65 100z" fill="url(#shaft)" />
      <path d="M508 612l160 82" stroke="#333" strokeWidth="3" />

      <path d="M660 692c-6-50 20-95 72-98 40 20 80 40 118 66 60 20 110 50 130 96l10 6-6 40-30 30-50-14c-90-30-140-70-190-92z" fill="url(#drill)" stroke="#222" strokeWidth="3" />
      <g fill="none" stroke="#2a2a27" strokeWidth="4">
        <path d="M672 700c-6-45 15-85 62-104M678 655l52-58" />
        <path d="M735 600c10 60 40 140 170 210" />
        <path d="M678 655c30 50 80 90 125 108M678 655c60 30 60 70 105 100" />
        <path d="M740 600c60 20 90 120 190 205M800 640c50 40 60 110 140 160" />
        <path d="M860 672c50 30 60 70 100 95M930 810l50-20 8-30M945 790l20 35M955 770l12 40" />
      </g>
      <g fill="none" stroke="#b7b5a9" strokeWidth="9">
        <path d="M752 640c20 60 60 110 130 148" />
        <path d="M815 668c40 50 60 80 110 112" />
      </g>
    </g>
  </Model>
);

const ViewCube = () => (
  <svg width="100" height="110" viewBox="60 45 300 330" role="img" aria-label="View cube">
    <ellipse cx="225" cy="250" rx="90" ry="34" fill="#efefef" />
    <path d="M105 118l93-44 92 44-92 50z" fill="#f7f7f7" stroke="#8e8e8e" strokeWidth="3" strokeDasharray="8 3" />
    <path d="M105 118l93 50v104l-86-47z" fill="#f4f4f4" stroke="#999" strokeWidth="3" />
    <path d="M290 118l-92 50v104l86-47z" fill="#efefef" stroke="#8e8e8e" strokeWidth="3" />
    <path d="M106 95l6 130" stroke="#7773e8" strokeWidth="6" />
    <path d="M112 225l100 65" stroke="#ef8f8f" strokeWidth="6" />
    <g fontFamily="Liberation Sans, sans-serif" fontSize="24" textAnchor="middle" fill="#777">
      <text x="202" y="126" transform="rotate(20 202 118)">TOP</text>
      <text x="152" y="208" fontSize="22" transform="rotate(27 152 200)">FRONT</text>
      <text x="244" y="208" fontSize="22" transform="rotate(-27 244 200)">RIGHT</text>
      <text x="98" y="92" fontSize="32" fontWeight="700" fill="#8d8aec">Z</text>
      <text x="228" y="312" fontSize="32" fontWeight="700" fill="#f09a9a">X</text>
    </g>
  </svg>
);

const App = () => {
  const [collapsed, setCollapsed] = useState(false);

  return (
    <Page>
      <GlobalStyle />
      <Defs />
      <TitleBar>
        <Lights>
          <Light $color="#fc5b57" aria-label="Close" />
          <Light $color="#fdbc40" aria-label="Minimize" />
          <Light $color="#28c840" aria-label="Zoom" />
        </Lights>
        <WindowTitle>Autodesk Fusion 360 (Education License)</WindowTitle>
      </TitleBar>

      <TabBar>
        <Tab>
          <TabCube />
          <TabName>Armatur...w v2 v1</TabName>
          <SyncDot />
          <button aria-label="Close tab">
            <svg width="14" height="16" viewBox="0 0 14 16">
              <path d="M1 3l12 12M13 3L1 15" stroke="#8a8a8a" strokeWidth="2" />
            </svg>
          </button>
        </Tab>
        <NewTab aria-label="New tab">
          <svg width="14" height="14" viewBox="0 0 14 14">
            <path d="M7 0v14M0 7h14" stroke="#8b98a6" strokeWidth="2" />
          </svg>
        </NewTab>
      </TabBar>

      <QuickBar>
        <QuickGroup $gap={31}>
          <QuickButton aria-label="Data panel"><AppsIcon /></QuickButton>
          <QuickGroup $gap={28}>
            <QuickButton aria-label="File"><FileIcon /><Caret /></QuickButton>
            <QuickButton aria-label="Save"><SaveIcon /></QuickButton>
          </QuickGroup>
          <QuickGroup $gap={14}>
            <QuickButton $gap={8} aria-label="Undo"><UndoIcon /><Caret color="#777" /></QuickButton>
            <QuickButton $gap={8} aria-label="Redo"><UndoIcon flip /><Caret color="#777" /></QuickButton>
          </QuickGroup>
        </QuickGroup>
        <QuickGroup $gap={27}>
          <QuickGroup $gap={42}>
            <QuickGroup $gap={32}>
              <QuickButton aria-label="Record"><RecordIcon /></QuickButton>
              <QuickButton $gap={4}><ClockIcon />1</QuickButton>
            </QuickGroup>
            <QuickButton $gap={8}>Keqing Song<Caret /></QuickButton>
          </QuickGroup>
          <QuickButton $gap={5} aria-label="Help"><HelpIcon /><Caret /></QuickButton>
        </QuickGroup>
      </QuickBar>

      <Ribbon>
        <Workspace>
          <Grip $height={30} />
          <WorkspaceButton>MODEL<Caret /></WorkspaceButton>
        </Workspace>
        {tools.map(({ label, width, icons }) => (
          <RibbonGroup key={label} $width={width}>
            <RibbonIcons>
              {icons.map((Icon, i) => (
                <button key={i} aria-label={`${label} tool ${i + 1}`}><Icon /></button>
              ))}
            </RibbonIcons>
            <RibbonLabel>{label}<Caret /></RibbonLabel>
          </RibbonGroup>
        ))}
        <RibbonGroup $width={89}>
          <SelectTile aria-label="Select"><SelectIcon /></SelectTile>
          <RibbonLabel>SELECT<Caret /></RibbonLabel>
        </RibbonGroup>
      </Ribbon>

      <Main>
        <BrowserPanel>
          <BrowserHeader>
            <button aria-label="Collapse panel" onClick={() => setCollapsed(!collapsed)}>
              <svg width="15" height="10" viewBox="0 0 15 10">
                <path d="M7 1v8L0 5zM14 1v8L7 5z" fill="#222" />
              </svg>
            </button>
            <BrowserTitle>BROWSER</BrowserTitle>
            <BrowserControls>
              <svg width="12" height="12" viewBox="0 0 12 12">
                <circle cx="6" cy="6" r="6" fill="#222" />
                <path d="M2 6h8" stroke="#ccc" strokeWidth="2" />
              </svg>
              <Grip $height={14} />
            </BrowserControls>
          </BrowserHeader>
          {!collapsed && (
            <Tree>
              <TreeRow $root>
                <svg width="12" height="12" viewBox="0 0 12 12">
                  <path d="M10 2v8H2z" fill="#555" stroke="#222" />
                </svg>
                <RootItem>
                  <RootSelected>
                    <Bulb on />
                    <Assembly />
                    <TreeName>Armature new v2 v1</TreeName>
                  </RootSelected>
                  <CheckBadge />
                </RootItem>
              </TreeRow>
              {nodes.map((node) => (
                <TreeRow key={node.name}>
                  <svg width="11" height="12" viewBox="0 0 11 12">
                    <path d="M2 1h2l5 5-5 5H2z" fill="#fff" stroke="#555" />
                  </svg>
                  <TreeItem>
                    {node.bulb && <Bulb on={node.bulb === "on"} />}
                    {node.icon}
                    <TreeName>{node.name}</TreeName>
                  </TreeItem>
                </TreeRow>
              ))}
            </Tree>
          )}
        </BrowserPanel>
        <Armature />
        <CubeSlot>
          <ViewCube />
        </CubeSlot>
        <NavBar>
          <NavGroup $gap={4}>
            <NavButton icon="orbit" label="Orbit" menu gap={6} />
            <NavButton icon="lookAt" label="Look at" />
          </NavGroup>
          <NavButton icon="hand" label="Pan" />
          <NavButton icon="zoom" label="Zoom" />
          <NavButton icon="zoomWindow" label="Zoom window" menu gap={6} />
          <NavGroup $gap={5}>
            <NavButton icon="display" label="Display settings" menu />
            <NavButton icon="grid" label="Grid and snaps" menu />
            <NavButton icon="views" label="Viewports" menu />
          </NavGroup>
        </NavBar>
      </Main>

      <Timeline>
        <Playback>
          <ScrollThumb />
          <PlaybackButtons>
            {playback.map(({ label, d }) => (
              <button key={label} aria-label={label}>
                <svg width="20" height="20" viewBox="-2 -1 20 20">
                  <path d={d} fill="#484848" />
                </svg>
              </button>
            ))}
          </PlaybackButtons>
        </Playback>
        <Track>
          <Features>
            {features.map((type, i) => (
              <Feature key={i}>
                <svg width="22" height="22" viewBox="0 0 22 22">{featureArt[type]}</svg>
              </Feature>
            ))}
          </Features>
          <Rail />
        </Track>
        <TimelineSettings aria-label="Timeline settings">
          <Gear />
        </TimelineSettings>
      </Timeline>
    </Page>
  );
};

export default App;
